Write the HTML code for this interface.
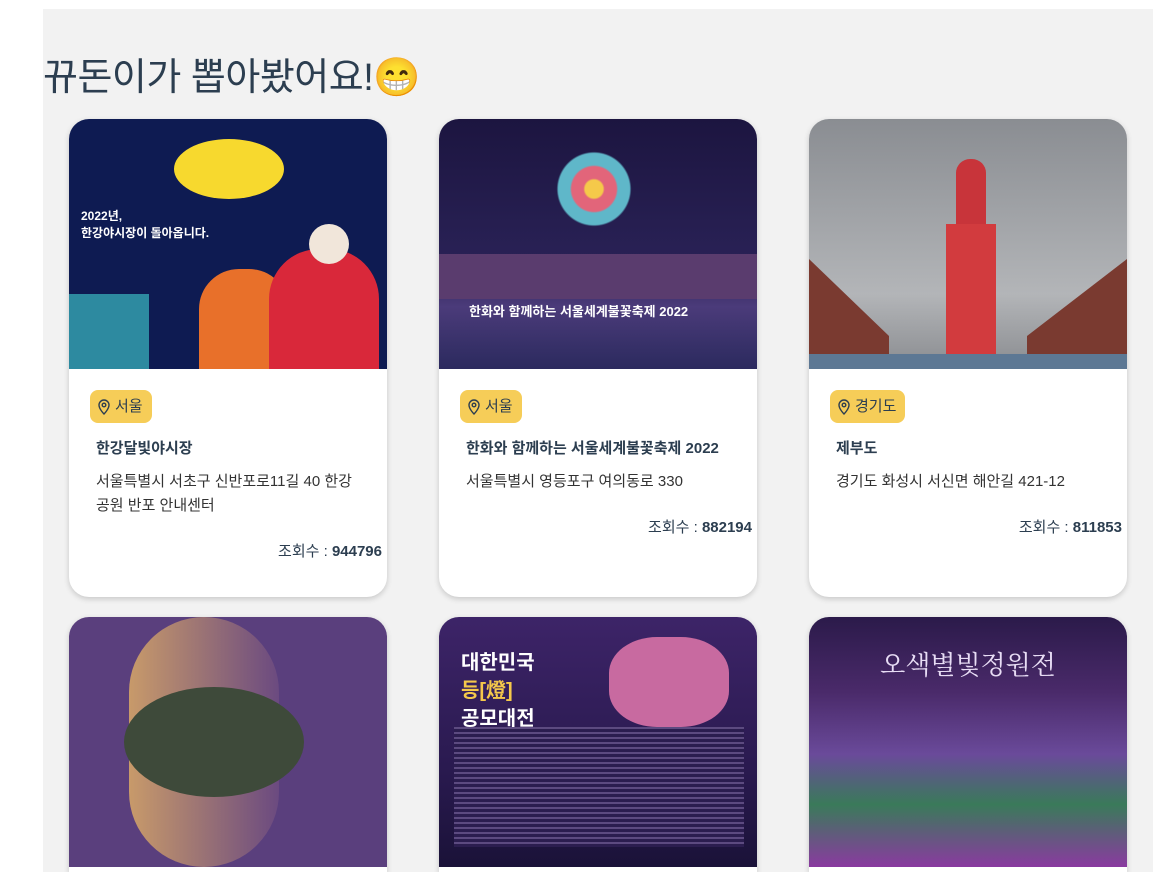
<!DOCTYPE html>
<html><head><meta charset="utf-8"><style>
*{margin:0;padding:0;box-sizing:border-box}
html,body{width:1169px;height:872px;overflow:hidden}
body{background:#fff;font-family:"Liberation Sans","Noto Sans CJK KR",sans-serif;color:#2c3e50;position:relative}
.panel{position:absolute;left:43px;top:9px;width:1110px;height:863px;background:#f2f2f2}
h1{position:absolute;left:43px;top:54px;font-size:38px;font-weight:400;color:#2c3e50;letter-spacing:-0.5px;line-height:48px}
.card{position:absolute;width:318px;height:478px;background:#fff;border-radius:20px;overflow:hidden;box-shadow:0 2px 6px rgba(0,0,0,.18)}
.card.r2{height:255px;border-radius:20px 20px 0 0}
.img{height:250px;position:relative;overflow:hidden}
.tag{position:absolute;left:21px;top:271px;height:33px;padding:0 9px 0 7px;background:#f6cd58;border-radius:8px;font-size:15px;line-height:33px;display:flex;align-items:center;gap:4px}
.t{position:absolute;left:27px;top:318px;font-size:15px;font-weight:700}
.a{position:absolute;left:27px;top:351px;width:270px;font-size:15px;line-height:24px;color:#333;word-break:keep-all}
.v{position:absolute;right:5px;font-size:15px}
.v b{font-weight:700}
</style></head><body>
<div class="panel"></div>
<h1>뀨돈이가 뽑아봤어요!😁</h1>

<div class="card" style="left:69px;top:119px">
 <div class="img" style="background:#0e1b52">
  <div style="position:absolute;left:105px;top:20px;width:110px;height:60px;border-radius:50%;background:#f7d92e"></div>
  <div style="position:absolute;left:12px;top:88px;color:#fff;font-size:12px;font-weight:700">2022년,<br>한강야시장이 돌아옵니다.</div>
  <div style="position:absolute;left:0;top:175px;width:80px;height:75px;background:#2d8aa0"></div>
  <div style="position:absolute;left:130px;top:150px;width:90px;height:100px;border-radius:40px 40px 0 0;background:#e8702a"></div>
  <div style="position:absolute;left:200px;top:130px;width:110px;height:120px;border-radius:50px 50px 0 0;background:#d9283a"></div>
  <div style="position:absolute;left:240px;top:105px;width:40px;height:40px;border-radius:50%;background:#f1e6da"></div>
 </div>
 <div class="tag"><svg width="14" height="16" viewBox="0 0 14 16"><path d="M7 15s5-5 5-9a5 5 0 0 0-10 0c0 4 5 9 5 9z" fill="none" stroke="#2c3e50" stroke-width="1.4"/><circle cx="7" cy="6" r="1.8" fill="none" stroke="#2c3e50" stroke-width="1.4"/></svg>서울</div>
 <div class="t">한강달빛야시장</div>
 <div class="a">서울특별시 서초구 신반포로11길 40 한강 공원 반포 안내센터</div>
 <div class="v" style="top:421px">조회수 : <b>944796</b></div>
</div>

<div class="card" style="left:439px;top:119px">
 <div class="img" style="background:linear-gradient(#1c1540 0%,#2a2257 60%,#4b3b7a 75%,#2b2a5e 100%)">
  <div style="position:absolute;left:85px;top:15px;width:140px;height:110px;border-radius:50%;background:radial-gradient(circle,#f5c94a 0 10%,#e2657a 12% 25%,#5fb7c9 27% 40%,transparent 42%)"></div>
  <div style="position:absolute;left:0;top:135px;width:318px;height:45px;background:#5a3c6e"></div>
  <div style="position:absolute;left:30px;top:182px;color:#fff;font-size:13px;font-weight:700">한화와 함께하는 서울세계불꽃축제 2022</div>
 </div>
 <div class="tag"><svg width="14" height="16" viewBox="0 0 14 16"><path d="M7 15s5-5 5-9a5 5 0 0 0-10 0c0 4 5 9 5 9z" fill="none" stroke="#2c3e50" stroke-width="1.4"/><circle cx="7" cy="6" r="1.8" fill="none" stroke="#2c3e50" stroke-width="1.4"/></svg>서울</div>
 <div class="t">한화와 함께하는 서울세계불꽃축제 2022</div>
 <div class="a">서울특별시 영등포구 여의동로 330</div>
 <div class="v" style="top:397px">조회수 : <b>882194</b></div>
</div>

<div class="card" style="left:809px;top:119px">
 <div class="img" style="background:linear-gradient(#8a8d92,#b3b5b8 70%,#8a8c90)">
  <div style="position:absolute;left:0;top:140px;width:80px;height:110px;background:#7a3a30;clip-path:polygon(0 0,100% 70%,100% 100%,0 100%)"></div>
  <div style="position:absolute;right:0;top:140px;width:100px;height:110px;background:#7a3a30;clip-path:polygon(100% 0,0 70%,0 100%,100% 100%)"></div>
  <div style="position:absolute;left:147px;top:40px;width:30px;height:70px;background:#c8343a;border-radius:14px 14px 0 0"></div>
  <div style="position:absolute;left:137px;top:105px;width:50px;height:145px;background:#d23b3e"></div>
  <div style="position:absolute;left:0;top:235px;width:318px;height:15px;background:#5d7894"></div>
 </div>
 <div class="tag"><svg width="14" height="16" viewBox="0 0 14 16"><path d="M7 15s5-5 5-9a5 5 0 0 0-10 0c0 4 5 9 5 9z" fill="none" stroke="#2c3e50" stroke-width="1.4"/><circle cx="7" cy="6" r="1.8" fill="none" stroke="#2c3e50" stroke-width="1.4"/></svg>경기도</div>
 <div class="t">제부도</div>
 <div class="a">경기도 화성시 서신면 해안길 421-12</div>
 <div class="v" style="top:397px">조회수 : <b>811853</b></div>
</div>

<div class="card r2" style="left:69px;top:617px">
 <div class="img" style="background:#5a3f7d">
  <div style="position:absolute;left:60px;top:0;width:150px;height:250px;background:linear-gradient(90deg,#c89a6a,#6b4a80);border-radius:75px"></div>
  <div style="position:absolute;left:55px;top:70px;width:180px;height:110px;border-radius:50%;background:#3e4a3a"></div>
 </div>
</div>
<div class="card r2" style="left:439px;top:617px">
 <div class="img" style="background:linear-gradient(#3d2468,#2a1a50 60%,#1a1238)">
  <div style="position:absolute;left:22px;top:32px;color:#fff;font-size:20px;font-weight:700;line-height:28px">대한민국<br><span style="color:#f5c84a">등[燈]</span><br>공모대전</div>
  <div style="position:absolute;left:170px;top:20px;width:120px;height:90px;background:#c86aa0;border-radius:40%"></div>
  <div style="position:absolute;left:15px;top:110px;width:290px;height:120px;background:repeating-linear-gradient(#5c4a80 0 2px,#2b1d4f 2px 5px)"></div>
 </div>
</div>
<div class="card r2" style="left:809px;top:617px">
 <div class="img" style="background:linear-gradient(#2b1a4a,#4a2a6a 30%,#6a4a9a 55%,#3a7a5a 75%,#8a3aa0)">
  <div style="position:absolute;left:0;top:28px;width:318px;text-align:center;color:#e8ddf5;font-size:26px;font-family:'Noto Serif CJK SC',serif">오색별빛정원전</div>
 </div>
</div>
</body></html>
